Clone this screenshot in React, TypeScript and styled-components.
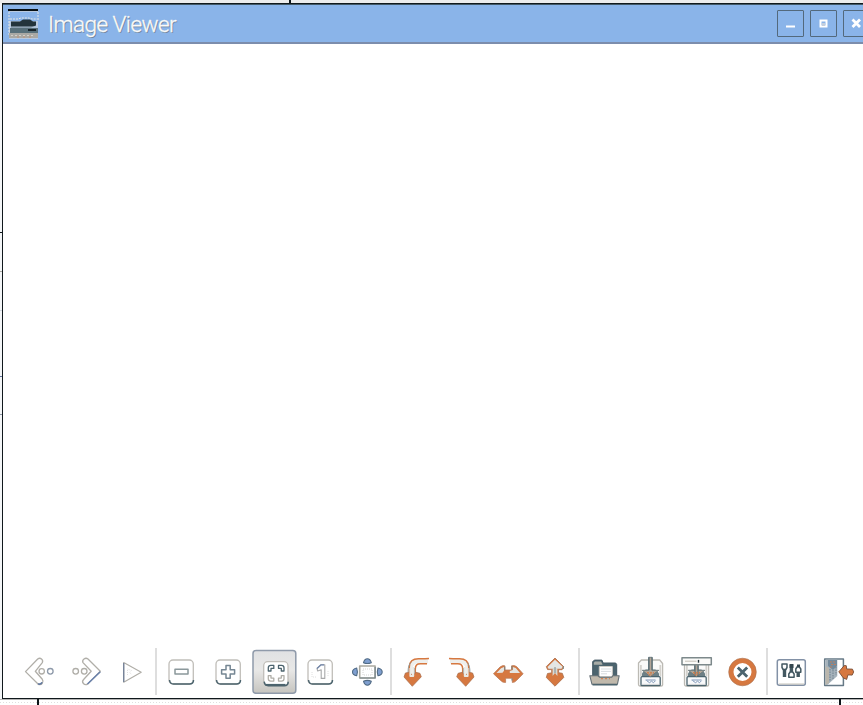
import React from "react";
import styled, { createGlobalStyle } from "styled-components";

const INK = "#4c646e";
const SOFT = "#b0aea8";
const RUST = "#d67840";
const BLUE = "#7f9fd0";

const Global = createGlobalStyle`
  html, body { margin: 0; padding: 0; overflow: hidden; background: #fff; }
  * { box-sizing: border-box; }
`;

const Desktop = styled.div`
  width: 863px;
  height: 705px;
  overflow: hidden;
  display: grid;
  grid-template-columns: 2px 861px;
  grid-template-rows: 3px 696px 6px;
  background: #fff;
`;

const TopStrip = styled.div`
  grid-column: 1 / -1;
  padding-left: 289px;
  background: #ececec;
`;

const Tick = styled.div`
  width: 2px;
  height: 100%;
  background: #0c1418;
`;

const Gutter = styled.div`
  background: #f4f6f8;
  padding-top: 229px;
`;

const GutterMark = styled.div<{ $tone: string; $gap: number }>`
  height: 1px;
  margin-bottom: ${(p) => p.$gap}px;
  background: ${(p) => p.$tone};
`;

const BottomStrip = styled.div`
  grid-column: 1 / -1;
  display: flex;
  justify-content: space-between;
  padding: 0 22px 0 37px;
  background:
    repeating-linear-gradient(90deg, #dfdfdf 0 1px, transparent 1px 3px) 0 3px / 100% 1px no-repeat,
    linear-gradient(#b4b4b4, #b4b4b4) 0 0 / 100% 1px no-repeat;
`;

const Window = styled.section`
  display: flex;
  flex-direction: column;
  min-height: 0;
  border: solid #10181c;
  border-width: 1px 0 1px 1px;
  background: #fff;
`;

const TitleBar = styled.header`
  flex: none;
  height: 40px;
  display: flex;
  align-items: center;
  border-top: 1px solid #435967;
  border-bottom: 2px solid #7c8dac;
  background: #8ab4e9;
  padding-left: 5px;
`;

const Title = styled.h1`
  margin: 0 auto 0 8px;
  font: 300 22.5px/38px Roboto, sans-serif;
  letter-spacing: -0.52px;
  color: #fff;
  -webkit-text-stroke: 0.35px #f1f1ee;
  text-shadow: 1px 1px 0 #71879f;
`;

const WindowButtons = styled.div`
  flex: none;
  display: flex;
  gap: 6px;
  margin-right: -7px;
`;

const WindowButton = styled.button`
  width: 27px;
  height: 27px;
  padding: 0;
  border: 1px solid #53697c;
  border-radius: 1px;
  background: transparent;
  svg { display: block; }
`;

const Canvas = styled.main`
  flex: 1;
`;

const Toolbar = styled.nav`
  flex: none;
  height: 52px;
  display: flex;
  align-items: flex-start;
  padding-left: 12.5px;
`;

const Group = styled.div<{ $width: number; $lead?: number }>`
  flex: none;
  display: flex;
  width: ${(p) => p.$width}px;
  padding: 3px 0 0 ${(p) => p.$lead ?? 1}px;
`;

const Separator = styled.div`
  flex: none;
  width: 2px;
  height: 47px;
  margin-top: 2px;
  background: #dedede;
`;

const Tool = styled.button`
  flex: 1 1 0;
  min-width: 0;
  height: 46px;
  padding: 0;
  border: 0;
  display: flex;
  justify-content: center;
  background: transparent;
`;

const Glyph = styled.svg`
  flex: none;
  width: 46px;
  height: 46px;
  fill: none;
  stroke-linejoin: round;
`;

type ToolDef = { label: string; art: React.ReactNode };

const Tile = ({ x = 11, y = 11 }: { x?: number; y?: number }) => (
  <>
    <rect x={x} y={y} width="24.3" height="24" rx="4" fill="#fff" stroke="#c0beb9" strokeWidth="1.3" />
    <path d={`M${x + 0.5} ${y + 20}q.5 4 4 4h16q4 0 4-4`} stroke={INK} strokeWidth="1.5" />
  </>
);

const Rotate = () => (
  <>
    <path d="M17.3 27v-6C17.3 14 21 12.3 26 12.3h9" stroke="#eeefed" strokeWidth="4.5" />
    <path d="M16.3 25v-7C16.5 12 20 9.8 25.5 9.8h6.5l4-.3M22.3 25v-5c0-4 1.5-5.2 5-5.2H34" stroke={RUST} strokeWidth="1.5" />
    <path d="M18 13.5q-3 2-3 10M21.7 19v9" stroke="#899798" strokeWidth=".8" />
    <path d="M11 28l1.4-4 4.1-.8 3.4 3.6 3-3.5 4 1 1.4 3.5-9 9.5z" fill={RUST} stroke="#a66c4a" strokeWidth=".7" />
    <path d="M17.3 19v8h3v-9" stroke="#e9e9e5" strokeWidth="1.8" />
  </>
);

const Floppy = () => (
  <>
    <path d="M14.4 11h18.3l2.9 3.5V36q0 1-1.5 1H13q-1.5 0-1.5-1.5V14z" fill="#fafaf9" stroke="#bcbab4" strokeWidth="1.3" />
    <path d="M13.9 16v11M33.3 16v11" stroke="#d4d2cd" strokeWidth="1.8" />
    <path d="M15 27.2v-3l3.6-3.7h9.8l3.6 3.7v3z" fill="#6d8086" />
    <rect x="14" y="27.7" width="19.2" height="9" rx="1" fill="#f9fafb" stroke={INK} strokeWidth="1.3" />
    <path d="M18.5 31h10M19.5 31.5l3 2.2 2-1.5 2 1.5 2-2" stroke="#8097b8" strokeWidth="1" />
    <path d="M15 35.4h17" stroke="#cfd2d3" />
  </>
);

const DownArrow = ({ top }: { top: number }) => (
  <>
    <path d={`M21.6 ${top}h3.6V21.3h6.6L23.3 27.7l-8-6.4h6.3z`} fill="#b2a597" stroke="#66777c" strokeWidth=".9" />
    <path d={`M22 ${top}v13M25 ${top}v13`} stroke={INK} strokeWidth="1" />
    <path d="M20 23.8h7M21.6 25.8h3.6" stroke={RUST} strokeWidth="1.2" strokeDasharray="2 1" />
  </>
);

const navigation: ToolDef[] = [
  {
    label: "Previous",
    art: (
      <g stroke={SOFT} strokeWidth="1.3" fill="#fff">
        <path d="M9.5 22.6 21.7 10q2-1.5 3.8 0t.8 3.6l-7 8.7 7 8q1.5 2 0 4t-4 1z" />
        <path d="M22 34.8q3 1 4-1.5" stroke="#6078a0" strokeWidth="1.7" />
        <circle cx="25.7" cy="22.3" r="2.7" /><circle cx="34.3" cy="22.3" r="2.8" stroke="#8e9aaa" />
      </g>
    ),
  },
  {
    label: "Next",
    art: (
      <g stroke={SOFT} strokeWidth="1.3" fill="#fff">
        <path d="M38.3 22.3 26 10q-2-1.5-4 0t-1 3.6l8.2 8.7-7.6 8.2q-2 2-.2 4t4.2.6z" />
        <path d="M25.5 35 38.3 22.8" stroke="#6880ab" strokeWidth="1.5" />
        <circle cx="13.7" cy="22.3" r="2.8" /><circle cx="22.2" cy="22.3" r="2.8" />
      </g>
    ),
  },
  {
    label: "Slideshow",
    art: (
      <>
        <path d="M14.7 13.6 32.2 23.3 14.7 33.2z" stroke={SOFT} strokeWidth="1.2" />
        <path d="M14.7 14v19" stroke="#74829a" strokeWidth="1.3" />
        <path d="M18.5 26v-6l4 1.5-2 2 2.5 2" stroke="#d8d8d8" strokeWidth=".8" strokeDasharray="1 1" />
      </>
    ),
  },
];

const zoomTools: ToolDef[] = [
  { label: "Zoom out", art: <><Tile /><rect x="17" y="20.3" width="13" height="4.8" fill="#fff" stroke="#8b989b" strokeWidth="1.5" /></> },
  {
    label: "Zoom in",
    art: <><Tile /><path d="M21 16.5h4.2v4.2h4.4v4.2h-4.4v4.4H21v-4.4h-4.4v-4.2H21z" fill="#fff" stroke="#758693" strokeWidth="1.5" /></>,
  },
  {
    label: "Fit to window",
    art: (
      <>
        <defs>
          <linearGradient id="pressed" x2="0" y2="1"><stop stopColor="#e0e1e3" /><stop offset=".45" stopColor="#e8e8e7" /><stop offset="1" stopColor="#c6c4bf" /></linearGradient>
        </defs>
        <rect x="2" y="1.5" width="42.8" height="42.8" rx="3" fill="url(#pressed)" stroke="#8f9aaa" strokeWidth="1.5" />
        <Tile x={12.7} y={12.7} />
        <path d="M14.5 35.9h20" stroke={INK} strokeWidth="2" />
        <g fill="#fff" strokeWidth="1.3">
          <path d="M17.3 22v-3.3q0-2.3 2.5-2.3h3v3H20V22z" stroke={INK} />
          <path d="M33 22v-3.3q0-2.3-2.5-2.3h-3v3h2.8V22z" stroke={INK} />
          <path d="M17.3 26.6v3.2q0 2.3 2.5 2.3h3v-3H20v-2.5zM33 26.6v3.2q0 2.3-2.5 2.3h-3v-3h2.8v-2.5z" stroke={SOFT} />
        </g>
      </>
    ),
  },
  {
    label: "Original size",
    art: (
      <>
        <Tile />
        <path d="M20 19.5 24 15.8h3.8v13.6h-3.6V20.8L20.7 22z" fill="#fff" stroke="#a8a9aa" strokeWidth="1.1" />
        <path d="M20 19.5 24 15.8h3" stroke="#7186ab" strokeWidth="1.2" />
        <path d="M15 23v5h5M31 22v6" stroke="#e0e0e0" strokeDasharray="1 1" />
      </>
    ),
  },
  {
    label: "Full screen",
    art: (
      <>
        <rect x="15.7" y="17" width="15.4" height="12" fill="#fff" stroke="#aaa9a0" strokeWidth="1.6" />
        <path d="M15.7 29h15.4V18" stroke="#76848a" strokeWidth="1.2" />
        <rect x="19" y="20" width="9" height="6" stroke="#d4d4d2" strokeDasharray="1 1" />
        <g fill={BLUE} stroke="#516b85" strokeWidth="1.1">
          <path d="M19.5 13.7q1-4 3.9-4t3.9 4q-4 1.7-7.8 0z" />
          <path d="M19.5 32.2q1 4 3.9 4t3.9-4q-4-1.7-7.8 0z" />
          <path d="M12.7 19q-4.2 1-4.2 3.9t4.2 3.9q1.4-4 0-7.8z" />
          <path d="M34 19q4.2 1 4.2 3.9T34 26.8q-1.4-4 0-7.8z" />
        </g>
      </>
    ),
  },
];

const transformTools: ToolDef[] = [
  { label: "Rotate left", art: <Rotate /> },
  { label: "Rotate right", art: <g transform="matrix(-1 0 0 1 46 0)"><Rotate /></g> },
  {
    label: "Flip horizontally",
    art: (
      <>
        <path d="M8.5 24.8 15 18q3-2 4.8-1.2V21h6.8v-4.2q3-.8 5.2 1l6.3 7-6.2 6.3q-2.2 2.6-4.6 2.3v-4.2h-6.7v4.2q-3 .4-5-2z" fill={RUST} stroke="#ba7a58" strokeWidth=".8" />
        <path d="M11.5 24 16 19.2l3-1.2v3.7l-1.5 2zM35 24 30.8 19l-3-1v3l-3 1v2z" fill="#e4e5e2" />
        <path d="M19.8 17.5v3.8M27 17v3.5M27 29.5v2" stroke="#75817f" strokeWidth="1" />
      </>
    ),
  },
  {
    label: "Flip vertically",
    art: (
      <>
        <path d="M24 9 15.3 17.6l1.3 3h4.1v3.2l-4.2.7-1.2 4 8.7 8.7 8.8-8.8-1.5-4.1-3.7-.6v-3h3.5l1.5-3.1z" fill={RUST} stroke="#a96e4d" strokeWidth=".8" />
        <path d="M24 10.7 16.5 18l1 1.7h13l1.2-2z" fill="#e4e6e4" />
        <path d="M21.6 19v8l2.4-3 2.4 3v-8z" fill="#d7d9d5" />
        <path d="M24 18v6M32.4 17v3" stroke="#778381" strokeWidth=".9" />
      </>
    ),
  },
];

const fileTools: ToolDef[] = [
  {
    label: "Open",
    art: (
      <>
        <path d="M11.7 28V12.5l2-1.4h7.2l1.3 2.9h12.5l1 1.5V28z" fill={INK} stroke="#435863" />
        <path d="M12.8 15.8v-2l1.2-1.2h6l1.6 3.2z" fill="#a8aca7" />
        <path d="M18.3 17.5h13v10h-13z" fill="#fff" stroke="#d1cec7" />
        <path d="M20.5 20h9M20.5 22.4h9M20.5 24.8h6" stroke="#aeb8be" strokeDasharray="1 1" />
        <path d="M8.8 26.7h8l2 1.6h11.8l1.3-1.6h6.3l-1.8 8.6H11z" fill="#c0b9ac" stroke="#667177" strokeWidth="1.1" />
        <path d="M20 29.7h9" stroke={RUST} strokeDasharray="2 2" />
        <path d="M11.5 35.7h24.8" stroke={INK} strokeWidth="1.6" />
      </>
    ),
  },
  { label: "Save", art: <><Floppy /><DownArrow top={8.3} /></> },
  {
    label: "Save as",
    art: (
      <>
        <Floppy /><DownArrow top={15} />
        <rect x="9" y="8.8" width="29.3" height="7" fill="#fbfbf9" stroke="#7d898b" strokeWidth="1.5" />
        <path d="M12 12.2h11.5" stroke="#c2beb5" strokeWidth="1" />
        <path d="M25.5 10.9v2.8" stroke="#26343a" strokeWidth="1.4" />
      </>
    ),
  },
  {
    label: "Delete",
    art: (
      <>
        <circle cx="23.5" cy="23" r="11.4" fill="#fff" stroke={RUST} strokeWidth="4.8" />
        <circle cx="23.5" cy="23" r="13.8" stroke="#a9704f" strokeWidth=".6" />
        <path d="m18.8 18.4 9.4 9.4m0-9.4-9.4 9.4" stroke={INK} strokeWidth="2.8" />
      </>
    ),
  },
];

const appTools: ToolDef[] = [
  {
    label: "Preferences",
    art: (
      <>
        <rect x="9.3" y="10.7" width="28" height="25.6" rx="2" fill="#fff" stroke="#8291a6" strokeWidth="1.5" />
        <path d="M11 35h25" stroke="#c5c2b9" />
        <g stroke="#435861" fill="#fff" strokeWidth="1.5">
          <path d="M16.5 20v8M30.2 23v5M23.4 16v7" strokeWidth="3.4" />
          <path d="M14 15h5v3.5l-1.2 2h-2.6l-1.2-2z" /><path d="M22.2 23h2.5l1.4 2v3.3h-5.3V25z" /><path d="M29 18h2.4l1.4 2v3.2h-5V20z" />
        </g>
        <path d="M21.5 15h4v4h-4zM29 15.5h3V18h-3z" fill="#34474f" />
      </>
    ),
  },
  {
    label: "Quit",
    art: (
      <>
        <path d="M9.7 10h18.7v26.4H9.7z" fill="#fff" stroke="#667986" strokeWidth="1.5" />
        <path d="M10.5 10.8h11.8V27L12.2 36h-1.7z" fill="#a5b2bb" />
        <path d="M13 11h9v6l-4 4-5-4z" fill="#738a9b" />
        <path d="M10.5 17 14 19v15l-3.5 2z" fill="#bab6ac" />
        <path d="M15 20v12m3-11v9m3-12v8" stroke="#71818e" strokeDasharray="1.5 1" />
        <path d="M15 13h5M16 15.5h5M15 18h3" stroke="#bd8060" strokeDasharray="2 1" />
        <path d="m23.8 22.8 5.5-6.3 2 .2.4 3.3 5.7.1 1.3 2.8-1.5 3.2-4.3-.2-1.2 4.5-3.4-1.5z" fill={RUST} stroke="#794e37" strokeWidth=".9" />
      </>
    ),
  },
];

const Tools = ({ items, width, lead }: { items: ToolDef[]; width: number; lead?: number }) => (
  <Group $width={width} $lead={lead}>
    {items.map((item) => (
      <Tool key={item.label} aria-label={item.label}>
        <Glyph viewBox="0 0 46 46">{item.art}</Glyph>
      </Tool>
    ))}
  </Group>
);

export default function App() {
  return (
    <>
      <Global />
      <Desktop>
        <TopStrip><Tick /></TopStrip>
        <Gutter>
          <GutterMark $tone="#10181c" $gap={38} />
          <GutterMark $tone="#aaa9a2" $gap={38} />
          <GutterMark $tone="#d2d8e0" $gap={65} />
          <GutterMark $tone="#61739b" $gap={37} />
          <GutterMark $tone="#8d96a5" $gap={0} />
        </Gutter>
        <Window>
          <TitleBar>
            <svg width="32" height="32" viewBox="0 0 32 32" aria-hidden="true">
              <path d="M1 3h29v28H1z" fill="#b8c9df" />
              <path d="M1 4h29v9H1z" fill="#8ab4e9" />
              <path d="M0 1h30v2H0z" fill="#081014" />
              <path d="M1 4v24M30 4v9M2 11h8l3-1h8l3 1h5" stroke="#e5e6e4" strokeDasharray="2 1" fill="none" />
              <path d="M3 13.5h9l3-2h7l3 2h3v4l-5 2H3z" fill="#23343b" />
              <path d="M2 20h28v6H2z" fill="#58707a" />
              <path d="M20 22h8" stroke="#172329" strokeWidth="2" />
              <path d="M3 19h25" stroke="#a9bdcf" />
              <path d="M1 25h29v5H1z" fill="#aaa9a4" />
              <path d="M3 27.5h24" stroke="#d4d0c9" strokeDasharray="2 2" />
              <path d="M9 29h16" stroke="#bf9277" strokeDasharray="2 4" />
            </svg>
            <Title>Image Viewer</Title>
            <WindowButtons>
              <WindowButton aria-label="Minimize">
                <svg width="25" height="25"><path d="M8 15.5h9" stroke="#fff" strokeWidth="2" /></svg>
              </WindowButton>
              <WindowButton aria-label="Maximize">
                <svg width="25" height="25" fill="none"><path d="M9.5 9.5h6v6h-6z" stroke="#fff" strokeWidth="2" /><path d="M11 12h3v3h-3z" fill="#c4cedb" /></svg>
              </WindowButton>
              <WindowButton aria-label="Close">
                <svg width="25" height="25"><path d="m8.5 8.5 7.5 7.5m0-7.5-7.5 7.5" stroke="#fff" strokeWidth="2.8" /></svg>
              </WindowButton>
            </WindowButtons>
          </TitleBar>
          <Canvas />
          <Toolbar>
            <Tools items={navigation} width={139.5} lead={0} />
            <Separator />
            <Tools items={zoomTools} width={233} />
            <Separator />
            <Tools items={transformTools} width={185.5} />
            <Separator />
            <Tools items={fileTools} width={186} />
            <Separator />
            <Tools items={appTools} width={93.5} lead={0.5} />
          </Toolbar>
        </Window>
        <BottomStrip><Tick /><Tick /></BottomStrip>
      </Desktop>
    </>
  );
}
